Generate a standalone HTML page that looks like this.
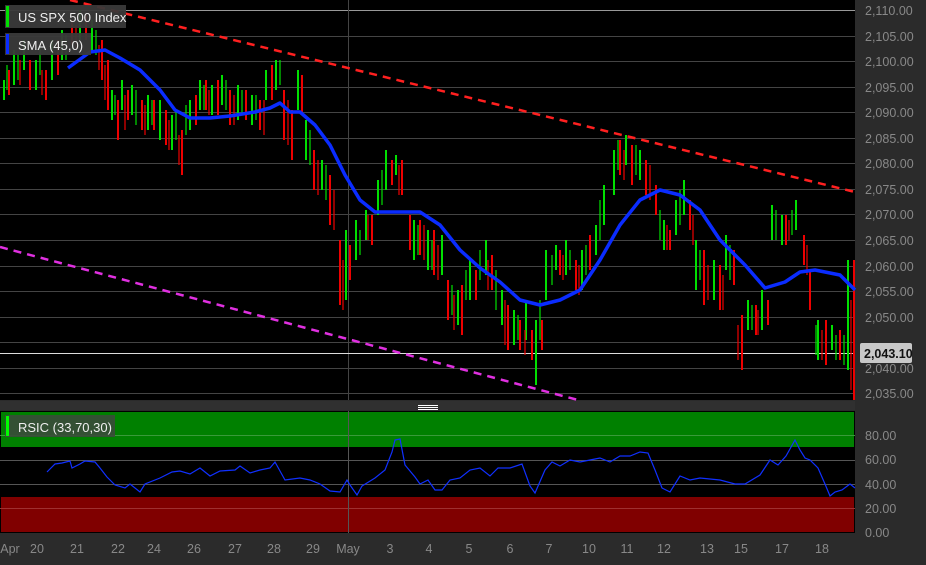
<!DOCTYPE html>
<html><head><meta charset="utf-8"><style>
body{margin:0;background:#2b2b2b;width:926px;height:560px;overflow:hidden;font-family:"Liberation Sans",sans-serif}
svg text{font-family:"Liberation Sans",sans-serif}
</style></head><body>
<svg width="926" height="560" xmlns="http://www.w3.org/2000/svg">
<rect width="926" height="560" fill="#2b2b2b"/>
<rect x="0" y="0" width="855" height="400" fill="#000"/>
<g stroke="#444" stroke-width="1">
<line x1="0" y1="10.5" x2="855" y2="10.5" stroke="#999"/>
<line x1="0" y1="36.5" x2="855" y2="36.5"/><line x1="0" y1="61.5" x2="855" y2="61.5"/>
<line x1="0" y1="87.5" x2="855" y2="87.5"/><line x1="0" y1="112.5" x2="855" y2="112.5"/>
<line x1="0" y1="138.5" x2="855" y2="138.5"/><line x1="0" y1="163.5" x2="855" y2="163.5"/>
<line x1="0" y1="189.5" x2="855" y2="189.5"/><line x1="0" y1="214.5" x2="855" y2="214.5"/>
<line x1="0" y1="240.5" x2="855" y2="240.5"/><line x1="0" y1="266.5" x2="855" y2="266.5"/>
<line x1="0" y1="291.5" x2="855" y2="291.5"/><line x1="0" y1="317.5" x2="855" y2="317.5"/>
<line x1="0" y1="342.5" x2="855" y2="342.5"/><line x1="0" y1="368.5" x2="855" y2="368.5"/>
<line x1="0" y1="393.5" x2="855" y2="393.5"/>
<line x1="348.5" y1="0" x2="348.5" y2="400"/>
</g>
<line x1="0" y1="353.5" x2="855" y2="353.5" stroke="#ddd"/>
<!-- candles -->
<path stroke="#00e000" stroke-width="2" fill="none" d="M4 80V100M14 50V85M24 40V70M36 60V90M52 40V80M62 30V60M80 10V40M92 20V50M112 90V120M122 80V110M132 85V115M148 95V130M160 100V140M172 115V150M190 100V130M200 80V110M212 85V115M222 75V105M238 85V120M252 95V125M266 70V100M276 60V90M298 70V110M306 120V160M322 160V190M346 230V300M356 220V260M366 210V240M378 180V215M386 150V190M396 155V175M414 220V260M428 230V270M442 235V275M458 290V325M470 260V300M486 240V275M502 290V325M514 310V345M526 300V340M536 320V385M546 250V300M556 245V270M566 240V275M582 250V290M596 225V255M604 185V225M614 150V195M626 135V165M640 150V180M664 220V250M676 200V235M684 180V215M696 240V290M714 260V300M726 235V270M748 300V330M762 290V330M772 205V240M782 215V245M796 200V230M818 320V360M832 325V350M848 260V370"/>
<path stroke="#00e000" stroke-width="1.2" fill="none" d="M7 65V90M18 55V80M40 45V75M66 35V60M96 30V55M115 95V115M136 90V125M152 100V125M176 110V140M186 105V135M204 85V110M226 80V110M242 90V115M256 95V120M280 60V85M310 130V165M326 165V200M360 230V255M382 170V205M418 225V255M432 240V270M452 285V315M466 270V300M480 250V280M496 270V310M518 315V340M540 300V340M552 255V285M570 250V270M586 245V275M600 200V240M618 140V170M636 145V175M660 210V240M680 190V225M700 250V280M730 245V280M752 305V330M776 210V240M792 210V235M816 325V355M836 335V360M844 335V365"/>
<path stroke="#ee0000" stroke-width="2" fill="none" d="M9 70V95M30 60V90M46 70V100M58 40V75M72 20V45M86 15V40M102 40V80M108 60V110M118 100V140M128 90V120M142 100V130M154 100V130M166 110V145M182 130V175M196 95V125M206 80V110M218 80V115M230 90V125M246 90V120M260 100V130M272 65V100M284 90V140M292 110V160M302 75V115M314 150V190M330 175V225M340 240V305M350 245V280M372 215V245M392 160V185M402 160V195M410 215V250M420 220V255M434 230V275M448 280V320M462 285V335M476 270V300M492 255V290M508 305V350M520 320V350M532 330V360M542 320V350M560 250V275M576 260V290M590 235V270M620 140V175M632 145V185M646 160V195M656 185V215M670 230V250M690 200V230M704 250V305M720 265V310M734 250V285M742 315V370M756 305V335M768 300V325M786 215V245M804 235V265M810 270V310M826 320V365M840 330V360M854 260V400"/>
<path stroke="#ee0000" stroke-width="1.2" fill="none" d="M20 60V85M42 70V95M76 25V50M99 45V70M105 65V100M125 95V130M145 105V135M169 120V150M179 135V165M209 90V115M234 95V125M264 100V135M288 100V145M318 160V195M334 190V230M343 260V310M368 215V240M399 165V195M424 225V260M438 245V280M454 295V330M488 260V290M505 300V345M525 330V355M563 255V280M579 265V295M624 150V180M650 165V200M667 225V250M693 215V245M708 265V300M723 275V310M738 325V360M758 310V335M789 220V240M807 245V275M822 330V360M851 300V390"/>
<!-- trend lines -->
<line x1="70" y1="0" x2="855" y2="192" stroke="#ff2020" stroke-width="2.5" stroke-dasharray="8,6"/>
<line x1="0" y1="247" x2="578" y2="400" stroke="#e030e0" stroke-width="2.5" stroke-dasharray="8,6"/>
<polyline fill="none" stroke="#0a2cff" stroke-width="3.5" stroke-linejoin="round" points="68,68 90,52 105,50 120,58 140,70 160,90 175,110 190,118 210,118 230,116 255,112 270,108 280,103 290,112 300,112 315,125 330,145 345,175 360,200 375,212 400,212 420,212 440,225 460,250 480,268 500,282 520,300 540,305 560,300 580,290 600,260 620,225 640,200 660,190 680,195 700,210 720,240 745,265 765,288 785,282 800,272 815,270 840,275 855,290"/>
<!-- legends -->
<rect x="5" y="5" width="121" height="23" fill="#3a3a3a" opacity="0.95"/><rect x="6" y="6" width="3" height="21" fill="#00e000"/>
<text x="18" y="22" fill="#eee" font-size="13">US SPX 500 Index</text>
<rect x="5" y="33" width="86" height="22" fill="#3a3a3a" opacity="0.95"/><rect x="6" y="34" width="3" height="20" fill="#0a2cff"/>
<text x="18" y="50" fill="#eee" font-size="13">SMA (45,0)</text>
<!-- price axis -->
<g fill="#888" font-size="12.5">
<text x="865" y="15">2,110.00</text><text x="865" y="41">2,105.00</text><text x="865" y="66">2,100.00</text>
<text x="865" y="92">2,095.00</text><text x="865" y="117">2,090.00</text><text x="865" y="143">2,085.00</text>
<text x="865" y="168">2,080.00</text><text x="865" y="194">2,075.00</text><text x="865" y="219">2,070.00</text>
<text x="865" y="245">2,065.00</text><text x="865" y="271">2,060.00</text><text x="865" y="296">2,055.00</text>
<text x="865" y="322">2,050.00</text><text x="865" y="373">2,040.00</text><text x="865" y="398">2,035.00</text>
</g>
<rect x="860" y="343" width="52" height="20" rx="2" fill="#c8c8c8"/>
<text x="864" y="358" fill="#111" font-size="12.5" font-weight="bold">2,043.10</text>
<!-- separator -->
<rect x="0" y="401" width="855" height="9" fill="#303030"/>
<g stroke="#fff" stroke-width="1"><line x1="418" y1="405.5" x2="438" y2="405.5"/><line x1="418" y1="407.5" x2="438" y2="407.5"/><line x1="418" y1="409.5" x2="438" y2="409.5"/></g>
<!-- RSI panel -->
<rect x="0" y="411" width="855" height="122" fill="#000"/>
<rect x="1" y="412" width="853" height="35" fill="#008000"/>
<rect x="1" y="497" width="853" height="35" fill="#800000"/>
<g stroke="#555"><line x1="0" y1="435.5" x2="855" y2="435.5" stroke="#3a9a3a"/><line x1="0" y1="460.5" x2="855" y2="460.5"/><line x1="0" y1="484.5" x2="855" y2="484.5"/><line x1="0" y1="508.5" x2="855" y2="508.5" stroke="#a03030"/><line x1="348.5" y1="411" x2="348.5" y2="533"/></g>
<polyline fill="none" stroke="#1030ff" stroke-width="1.2" points="47,472 55,464 62,463 70,461 72,468 80,464 85,461 95,462 100,468 107,477 115,485 125,488 130,484 140,492 145,484 160,478 172,472 180,471 190,474 200,468 210,476 220,471 235,470 240,466 250,473 260,470 270,468 275,462 285,480 300,478 310,480 320,484 330,491 340,492 347,480 350,485 357,495 362,486 375,478 385,470 392,452 395,440 400,439 405,465 415,477 420,484 428,480 435,490 442,490 450,480 460,478 470,470 480,468 490,476 498,468 510,468 522,464 530,486 535,493 545,470 552,462 560,466 570,460 580,462 590,460 600,458 610,462 620,456 630,456 640,452 648,453 655,470 662,488 670,492 680,476 690,480 700,478 720,480 735,484 745,484 760,475 770,460 778,465 786,456 795,440 800,450 805,458 810,460 818,468 825,484 830,496 835,492 842,490 850,484 855,488"/>
<rect x="5" y="415" width="110" height="22" fill="#3a4a3a" opacity="0.9"/><rect x="6" y="416" width="3" height="20" fill="#00ff00"/>
<text x="18" y="432" fill="#eee" font-size="13">RSIC (33,70,30)</text>
<g fill="#888" font-size="12.5">
<text x="865" y="440">80.00</text><text x="865" y="464">60.00</text><text x="865" y="489">40.00</text><text x="865" y="513">20.00</text><text x="865" y="537">0.00</text>
</g>
<!-- x axis -->
<g fill="#888" font-size="12.5" text-anchor="middle">
<text x="10" y="553">Apr</text><text x="37" y="553">20</text><text x="77" y="553">21</text><text x="118" y="553">22</text>
<text x="154" y="553">24</text><text x="194" y="553">26</text><text x="235" y="553">27</text><text x="274" y="553">28</text>
<text x="313" y="553">29</text><text x="348" y="553">May</text><text x="390" y="553">3</text><text x="429" y="553">4</text>
<text x="469" y="553">5</text><text x="510" y="553">6</text><text x="549" y="553">7</text><text x="589" y="553">10</text>
<text x="627" y="553">11</text><text x="664" y="553">12</text><text x="707" y="553">13</text><text x="741" y="553">15</text>
<text x="782" y="553">17</text><text x="822" y="553">18</text>
</g>
</svg>
</body></html>
